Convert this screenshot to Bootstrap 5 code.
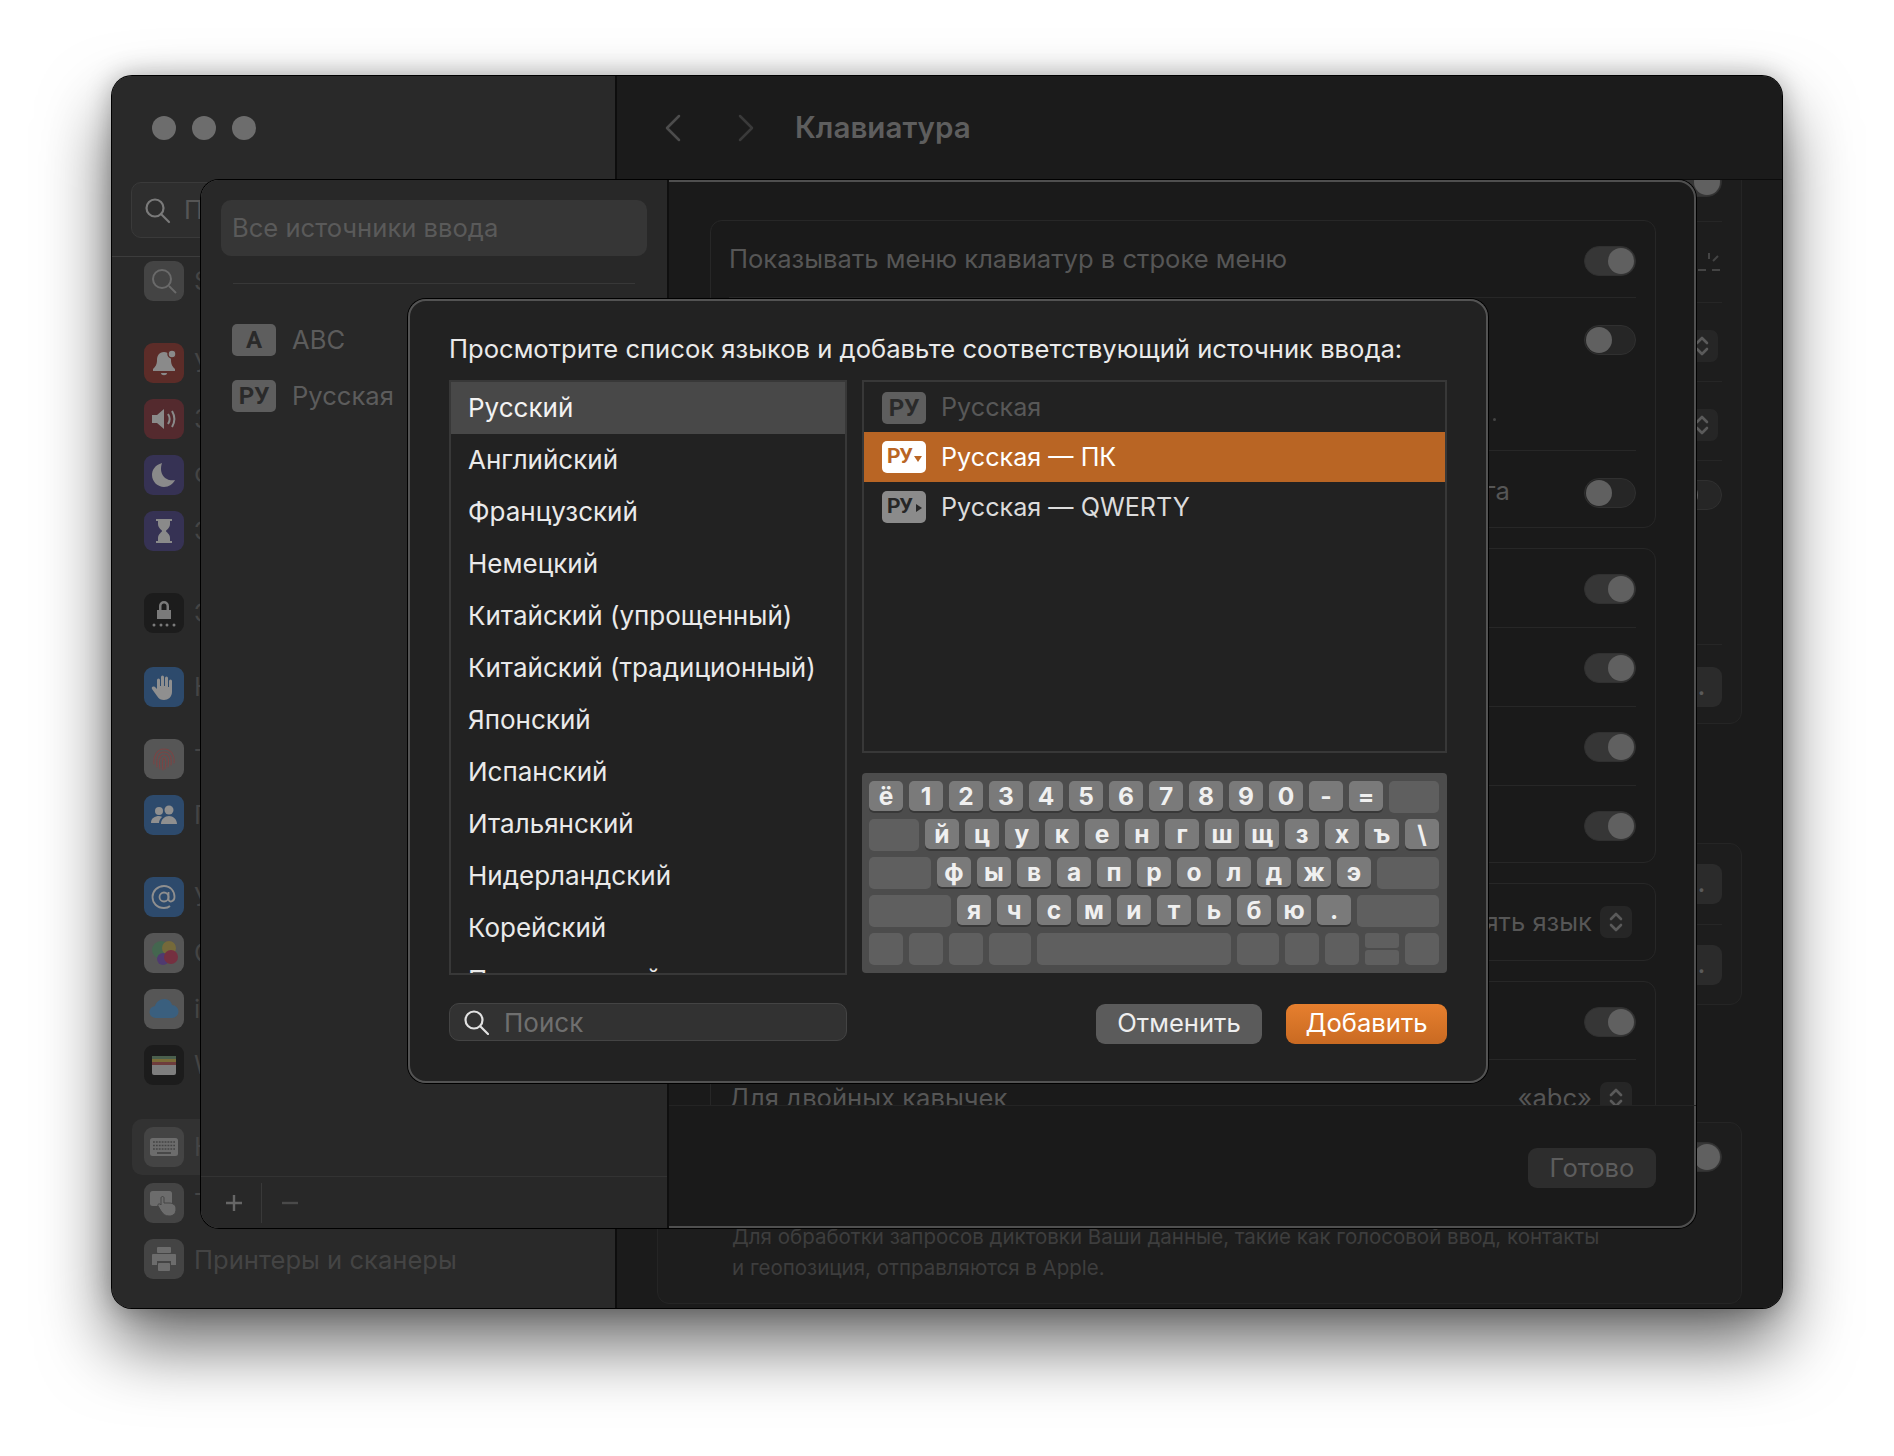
<!DOCTYPE html>
<html lang="ru">
<head>
    <meta charset="UTF-8">
    <meta name="viewport" content="width=device-width, initial-scale=1.0">
    <title>Клавиатура</title>

    <link href="https://cdn.jsdelivr.net/npm/bootstrap@5.3.0/dist/css/bootstrap.min.css" rel="stylesheet">

    <style>
        html, body { height: 100%; }
        body {
            background: #fff;
            font-family: "Inter", "Liberation Sans", sans-serif;
            font-size: 25.6px;
            overflow: hidden;
        }
        .stage { padding: 76px 111px 0 112px; }

        /* окна */
        .mac-window {
            position: relative;
            width: 1670px;
            height: 1232px;
            border-radius: 20px;
            box-shadow: 0 0 0 1px #000, inset 0 0 0 1px #4b4b4b, 0 36px 70px rgba(0, 0, 0, .6), 0 0 26px rgba(0, 0, 0, .28);
            overflow: hidden;
            background: #1b1b1b;
        }
        .side-pane { width: 505px; background: #292929; border-right: 2px solid #0d0d0d; flex-shrink: 0; }
        .traffic { padding: 40px 0 0 40px; height: 105px; }
        .traffic i { width: 24px; height: 24px; border-radius: 50%; background: #6d6d6d; display: block; }
        .side-search {
            margin: 1px 20px 0 19px; height: 56px; border-radius: 10px; border: 1px solid #3a3a3a;
            background: #2e2e2e; padding-left: 11px; color: #555;
        }
        .side-search .side-label { margin-left: 5px; }
        .side-rule { height: 19px; border-bottom: 1px solid #3c3c3c; }
        .side-list { padding: 4px 0 0 32px; }
        .side-row { height: 40px; color: #444; white-space: nowrap; margin-bottom: 16px; position: relative; }
        .side-row.gap-top { margin-top: 26px; }
        .side-row.tall { margin-top: 18px; margin-bottom: 32px; }
        .side-row.now::before {
            content: ""; position: absolute; left: -12px; right: 0; top: -8px; height: 56px; background: #323232; border-radius: 10px;
        }
        .side-label { width: 16px; margin-left: 2px; overflow: hidden; position: relative; }
        .side-label.open { width: auto; padding-top: 3px; }
        .tile {
            width: 40px; height: 40px; border-radius: 9px; flex-shrink: 0; position: relative;
            display: flex; align-items: center; justify-content: center;
        }
        .tile svg { width: 30px; height: 30px; }
        .tile-a { background: #444; }
        .tile-red { background: #5c2c28; }
        .tile-rose { background: #542a2e; }
        .tile-moon { background: #363254; }
        .tile-black { background: #1c1c1c; }
        .tile-blue { background: #2d4a6c; }
        .tile-grey { background: #565656; }
        .tile-soft { background: #444; }

        .main-pane { background: #1b1b1b; min-width: 0; }
        .main-head { height: 104px; border-bottom: 1px solid #0c0c0c; padding-left: 47px; flex-shrink: 0; }
        .main-head b { font-size: 29.6px; font-weight: 600; color: #5e5e5e; margin-left: 40px; }
        .fwd-chev { margin-left: 55px; }
        .main-body { padding: 0 40px; overflow: hidden; }
        .set-group { border: 1px solid #252525; border-radius: 12px; background: #1d1d1d; padding: 0 19px; }
        .set-group + .set-group { margin-top: 119px; }
        .set-group.shift-up { margin-top: -61px; }
        .set-group.last-group { margin-top: 117px; }
        .set-row { border-bottom: 1px solid #262626; }
        .set-row:last-child { border-bottom: 0; }
        .h-102 { height: 102px; } .h-81 { height: 81px; } .h-79 { height: 79px; } .h-184 { height: 184px; } .h-78 { height: 78px; }
        .hint { font-size: 20.5px; color: #3e3e3e; line-height: 31px; padding: 49px 0 20px 55px; }
        .sun { color: #444; }
        .nudge-r { margin-right: 4px; margin-top: 8px; }
        .nudge-b { margin-top: 6px; }
        .set-toggle-pad { padding-top: 19px; }
        .more-btn {
            width: 60px; height: 40px; border-radius: 9px; background: #2b2b2b; color: #5a5a5a;
            text-align: right; padding-right: 17px; line-height: 40px; font-size: 22px; font-weight: 700;
        }

        /* лист с источниками ввода */
        .source-sheet {
            position: absolute; left: 89px; top: 104px; width: 1495px; height: 1048px;
            border-radius: 18px; overflow: hidden; background: #1a1a1a;
            box-shadow: 0 0 0 1px #000, inset 0 0 0 2px #4f4f4f;
        }
        .sheet-left { width: 468px; background: #282828; border-right: 2px solid #0f0f0f; flex-shrink: 0; }
        .sheet-title {
            margin: 20px 20px 0; height: 56px; border-radius: 10px; background: #363636;
            color: #5a5a5a; padding-left: 11px;
        }
        .sheet-rule { margin: 27px 32px 0; border-top: 1px solid #383838; }
        .sheet-src { padding: 40px 0 0 31px; gap: 16px; color: #5c5c5c; line-height: 32px; }
        .badge-src {
            width: 44px; height: 32px; border-radius: 5px; background: #5e5e5e; color: #2a2a2a;
            font-family: "Roboto", "Liberation Sans", sans-serif;
            font-weight: 700; font-size: 24px; flex-shrink: 0; position: relative;
        }
        .sheet-foot { margin-top: auto; height: 52px; border-top: 1px solid #333; padding-left: 23px; color: #666; }
        .sheet-foot i { width: 1px; height: 40px; background: #393939; margin: 0 18px 0 17px; }
        .sheet-right { min-width: 0; }
        .sheet-scroll { height: 925px; overflow: hidden; padding: 40px 40px 0 41px; flex-shrink: 0; }
        .sheet-foot-r { border-top: 1px solid #242424; padding: 42px 40px 0 0; }
        .opt-group { border: 1px solid #272727; border-radius: 12px; padding: 0 19px 0 18px; color: #565656; margin-bottom: 20px; }
        .opt-row { border-bottom: 1px solid #272727; padding-top: 25px; }
        .opt-row:last-child { border-bottom: 0; }
        .opt-row.plain { padding-top: 0; }
        .opt-row.low { padding-top: 27px; }
        .h-77 { height: 77px; } .h-153 { height: 153px; } .h-76 { height: 76px; }
        .switch-dim { width: 52px; height: 30px; border-radius: 15px; background: #262626; border: 1px solid #303030; position: relative; flex-shrink: 0; }
        .switch-dim::after {
            content: ""; position: absolute; left: 1px; top: 1px; width: 26px; height: 26px; border-radius: 50%; background: #606060;
        }
        .switch-dim.on { background: #363636; }
        .switch-dim.on::after { left: 23px; }
        .stepper { width: 32px; height: 32px; border-radius: 7px; background: #262626; color: #5a5a5a; flex-shrink: 0; }
        .stepper svg { width: 16px; height: 24px; }
        .step-in { margin-right: 4px; }
        .done-btn { width: 128px; height: 40px; border-radius: 9px; background: #2d2d2d; color: #5d5d5d; padding: 0; border: 0; font-size: 25.6px; }
        .late-text { margin-right: 74px; margin-top: -6px; }
        .tail-dot { margin: 93px 88px 0 0; width: 3px; height: 3px; border-radius: 50%; background: #444; }
        .up-3 { margin-top: -6px; }
        .quote-row { padding-top: 19px; }

        /* диалог */
        .add-dialog {
            position: absolute; left: 296px; top: 223px; width: 1080px; height: 784px;
            border-radius: 18px; background: #222; padding: 35px 41px 0;
            box-shadow: 0 0 0 1px #000, inset 0 0 0 2px #535353;
            color: #eaeaea;
        }
        .dlg-title { line-height: 30px; margin-bottom: 16px; font-size: 25.6px; white-space: nowrap; }
        .lang-col { width: 398px; flex-shrink: 0; }
        .lang-list { height: 595px; border: 2px solid #383838; overflow: hidden; border-radius: 0; background: transparent; }
        .lang-list .list-group-item {
            height: 52px; border: 0; border-radius: 0; background: transparent; color: #eaeaea;
            padding: 0 0 2px 17px; display: flex; align-items: center; flex-shrink: 0; white-space: nowrap; font-size: 26px;
        }
        .lang-list .list-group-item.active { background: #484848; color: #f2f2f2; }
        .dlg-search { margin-top: 28px; height: 38px; position: relative; }
        .dlg-search .form-control {
            height: 38px; padding: 0 0 0 54px; border-radius: 10px; background: #323232; border: 1px solid #444;
            color: #eee; font-size: 26px; box-shadow: none;
        }
        .dlg-search .form-control::placeholder { color: #6f6f6f; }
        .dlg-search svg { position: absolute; left: 14px; top: 6px; width: 26px; height: 26px; color: #e2e2e2; }
        .side-col { min-width: 0; flex: 1; margin-left: 15px; }
        .layout-list { height: 373px; border: 2px solid #383838; background: transparent; border-radius: 0; }
        .layout-list .list-group-item {
            border: 0; border-radius: 0; background: transparent; color: #dcdcdc; height: 50px;
            padding: 0 0 0 18px; display: flex; align-items: center; gap: 15px; font-size: 25.2px;
        }
        .layout-list .list-group-item.first { color: #585858; height: 51px; }
        .layout-list .list-group-item.active { background: #b96524; color: #fff; }
        .item-text { padding-top: 2px; }
        .badge-mark { background: #fff; color: #b96524; }
        .badge-gray { background: #8b8b8b; color: #262626; }
        .tri-down, .tri-right { position: absolute; width: 0; height: 0; }
        .tri-down { right: 4px; top: 15px; border: 4px solid transparent; border-top: 6px solid #b96524; border-bottom: 0; }
        .tri-right { right: 4px; top: 13px; border: 4px solid transparent; border-left: 6px solid #262626; border-right: 0; }
        .badge-tight { justify-content: flex-start !important; padding-left: 5px; font-size: 21px; letter-spacing: -1px; }

        .kb-panel { margin-top: 20px; height: 200px; background: #4c4c4c; border-radius: 4px; padding: 8px 6px 8px 7px; gap: 6px; }
        .kb-line { gap: 6px; height: 32px; }
        .kc {
            width: 34px; height: 30px; border-radius: 5px; background: #7a7a7a; color: #f0f0f0;
            font-size: 24.5px; font-weight: 700; box-shadow: 0 2px 0 #383838; line-height: 1;
        }
        .kb-off { height: 32px; width: 34px; border-radius: 5px; background: #5f5f5f; flex-shrink: 0; }
        .w-42 { width: 42px; } .w-50p { width: 50px; } .w-62 { width: 62px; } .w-82 { width: 82px; } .w-194 { width: 194px; }
        .kb-arrows { width: 34px; gap: 2px; }
        .kb-arrows .kb-off { height: 15px; border-radius: 3px; }
        .dlg-actions { margin-top: 31px; gap: 24px; }
        .dlg-actions .btn {
            height: 40px; border-radius: 9px; border: 0; padding: 0 0 2px; font-size: 25.6px; line-height: 1;
        }
        .btn-plain { width: 166px; background: #5b5b5b; color: #eee; }
        .btn-plain:hover { background: #5b5b5b; color: #eee; }
        .btn-mac { width: 161px; background: linear-gradient(#e67f2e, #c96a22); color: #fff; }
        .btn-mac:hover { color: #fff; }
    </style>
</head>
<body>

<div class="stage">
    <div class="mac-window d-flex">

        <!-- боковая панель настроек -->
        <aside class="side-pane d-flex flex-column">
            <div class="traffic d-flex gap-3"><i></i><i></i><i></i></div>
            <div class="side-search d-flex align-items-center gap-2">
                <svg width="28" height="28" viewBox="0 0 28 28" fill="none" stroke="#7a7a7a" stroke-width="2.2"><circle cx="12" cy="12" r="8.5"/><path d="M18 18l8 8" stroke-linecap="round"/></svg>
                <span class="side-label">Поиск</span>
            </div>
            <div class="side-rule"></div>
            <div class="side-list d-flex flex-column">
                <div class="side-row d-flex align-items-center gap-2">
                    <span class="tile tile-a"><svg viewBox="0 0 30 30" fill="none" stroke="#6a6a6a" stroke-width="2"><circle cx="13" cy="13" r="9"/><path d="M20 20l7 7"/></svg></span><span class="side-label">Spotlight</span>
                </div>
                <div class="side-row gap-top d-flex align-items-center gap-2">
                    <span class="tile tile-red"><svg viewBox="0 0 30 30" fill="#8a8a8a"><path d="M15 4c-5 0-7 4-7 8 0 5-2 7-4 9v2h22v-2c-2-2-4-4-4-9 0-4-2-8-7-8z"/><path d="M12 25h6c0 3-6 3-6 0z"/><circle cx="23" cy="6" r="4" fill="#8a8a8a" stroke="#5c2c28" stroke-width="1.5"/></svg></span><span class="side-label">Уведомления</span>
                </div>
                <div class="side-row d-flex align-items-center gap-2">
                    <span class="tile tile-rose"><svg viewBox="0 0 30 30" fill="#8a8a8a"><path d="M3 11h5l7-6v20l-7-6H3z"/><path d="M19 10c2 3 2 7 0 10M23 7c3 5 3 11 0 16" fill="none" stroke="#8a8a8a" stroke-width="2"/></svg></span><span class="side-label">Звук</span>
                </div>
                <div class="side-row d-flex align-items-center gap-2">
                    <span class="tile tile-moon"><svg viewBox="0 0 30 30" fill="#8a8a8a"><path d="M13 3C6 5 3 10 3 15c0 7 6 12 12 12 5 0 9-3 11-7-8 2-17-5-13-17z"/></svg></span><span class="side-label">Фокусирование</span>
                </div>
                <div class="side-row d-flex align-items-center gap-2">
                    <span class="tile tile-moon"><svg viewBox="0 0 30 30" fill="#8a8a8a"><path d="M7 3h16v2h-2v3c0 4-4 6-4 7s4 3 4 7v3h2v2H7v-2h2v-3c0-4 4-6 4-7s-4-3-4-7V5H7z"/></svg></span><span class="side-label">Экранное время</span>
                </div>
                <div class="side-row gap-top d-flex align-items-center gap-2">
                    <span class="tile tile-black"><svg viewBox="0 0 30 30" fill="#7a7a7a"><path d="M10 12V8a5 5 0 0110 0v4h2v9H8v-9zm2.500 0h5V8a2.500 2.500 0 00-5 0z"/><circle cx="5" cy="27" r="1.500"/><circle cx="12" cy="27" r="1.500"/><circle cx="18" cy="27" r="1.500"/><circle cx="25" cy="27" r="1.500"/></svg></span><span class="side-label">Экран блокировки</span>
                </div>
                <div class="side-row tall d-flex align-items-center gap-2">
                    <span class="tile tile-blue"><svg viewBox="0 0 30 30" fill="#8f8f8f"><path d="M8 8a1.500 1.500 0 013 0v6h1V5a1.500 1.500 0 013 0v9h1V6a1.500 1.500 0 013 0v9h1V9a1.500 1.500 0 013 0v11c0 5-4 8-8 8-3 0-5-1-7-4l-5-7c-1-2 1-3 3-2l2 2z"/></svg></span><span class="side-label">Конфиденциальность</span>
                </div>
                <div class="side-row d-flex align-items-center gap-2">
                    <span class="tile tile-grey"><svg viewBox="0 0 30 30" fill="none" stroke="#7c4444" stroke-width="1.100" stroke-linecap="round"><path d="M5 20c-1-8 3-15 10-15s11 6 10 14"/><path d="M8 23c-1-9 1-15 7-15s8 5 7 13"/><path d="M11 25c-1-6-1-14 4-14s5 5 4 12"/><path d="M14 26c-1-4-1-12 1-12s2 5 1 11"/></svg></span><span class="side-label">Touch ID</span>
                </div>
                <div class="side-row d-flex align-items-center gap-2">
                    <span class="tile tile-blue"><svg viewBox="0 0 30 30" fill="#8f8f8f"><circle cx="10" cy="11" r="4"/><circle cx="20" cy="10" r="4.500"/><path d="M2 23c0-5 4-7 8-7 2 0 3 1 3 1-2 2-3 4-3 6zM12 24c0-5 4-8 8-8s8 3 8 8z"/></svg></span><span class="side-label">Пользователи</span>
                </div>
                <div class="side-row gap-top d-flex align-items-center gap-2">
                    <span class="tile tile-blue"><svg viewBox="0 0 30 30" fill="none" stroke="#8f8f8f" stroke-width="1.800"><circle cx="15" cy="15" r="4.500"/><path d="M19.500 10v7c0 4 6 3 6-2 0-6-4-11-10.500-11S3.500 9 3.500 15 8 26 15 26c3 0 5-1 6-2"/></svg></span><span class="side-label">Учетные записи</span>
                </div>
                <div class="side-row d-flex align-items-center gap-2">
                    <span class="tile tile-grey"><svg viewBox="0 0 30 30"><circle cx="12" cy="12" r="9" fill="#44664f"/><circle cx="20" cy="10" r="7" fill="#75693a"/><circle cx="14" cy="21" r="6" fill="#4f3a70"/><circle cx="22" cy="19" r="7" fill="#753040"/></svg></span><span class="side-label">Game Center</span>
                </div>
                <div class="side-row d-flex align-items-center gap-2">
                    <span class="tile tile-grey"><svg viewBox="0 0 30 30" fill="#3a5f7e"><path d="M7 24a6 6 0 01-1-12c1-4 5-7 9-7s7 2 8 6a6.500 6.500 0 010 13z"/></svg></span><span class="side-label">iCloud</span>
                </div>
                <div class="side-row d-flex align-items-center gap-2">
                    <span class="tile tile-black"><svg viewBox="0 0 30 30"><rect x="3" y="6" width="24" height="19" rx="2" fill="#7e7e7e"/><rect x="3" y="6" width="24" height="3" fill="#4a5f4d"/><rect x="3" y="9" width="24" height="3" fill="#7a6c38"/><rect x="3" y="12" width="24" height="3" fill="#6e3c3c"/></svg></span><span class="side-label">Wallet</span>
                </div>
                <div class="side-row gap-top now d-flex align-items-center gap-2">
                    <span class="tile tile-soft"><svg viewBox="0 0 30 30" fill="none"><rect x="1" y="6" width="28" height="18" rx="2.500" fill="#6c6c6c"/><path d="M4 10h22M4 13.500h22M4 17h22" stroke="#444" stroke-width="1.600" stroke-dasharray="1.800 1.100"/><path d="M8 21h14" stroke="#444" stroke-width="1.800"/></svg></span><span class="side-label">Клавиатура</span>
                </div>
                <div class="side-row d-flex align-items-center gap-2">
                    <span class="tile tile-soft"><svg viewBox="0 0 30 30" fill="#6c6c6c"><rect x="1" y="3" width="22" height="15" rx="2.500"/><path d="M12 10c0-2 3-2 3 0v5h5c4 0 7 2 7 6 0 5-3 7-7 7-4 0-6-2-8-5l-3-5c-1-2 2-3 3-1z" stroke="#444"/></svg></span><span class="side-label">Трекпад</span>
                </div>
                <div class="side-row d-flex align-items-center gap-2">
                    <span class="tile tile-soft"><svg viewBox="0 0 30 30" fill="#6c6c6c"><rect x="8" y="3" width="14" height="6" rx="1"/><path d="M4 10h22a1 1 0 011 1v10h-5v-4H8v4H3V11a1 1 0 011-1z"/><rect x="9" y="19" width="12" height="8" rx="1"/></svg></span><span class="side-label open">Принтеры и сканеры</span>
                </div>
            </div>
        </aside>

        <!-- правая часть окна, под листом -->
        <section class="main-pane flex-grow-1 d-flex flex-column">
            <header class="main-head d-flex align-items-center">
                <svg width="18" height="30" viewBox="0 0 18 30" fill="none" stroke="#4c4c4c" stroke-width="2.500" stroke-linecap="round" stroke-linejoin="round"><path d="M15 3L3 15l12 12"/></svg>
                <svg class="fwd-chev" width="18" height="30" viewBox="0 0 18 30" fill="none" stroke="#3a3a3a" stroke-width="2.500" stroke-linecap="round" stroke-linejoin="round"><path d="M3 3l12 12L3 27"/></svg>
                <b>Клавиатура</b>
            </header>
            <div class="main-body flex-grow-1">
                <div class="set-group shift-up">
                    <div class="set-row h-102 d-flex justify-content-end align-items-end pb-4"><span class="switch-dim on"></span></div>
                    <div class="set-row h-81 d-flex justify-content-end align-items-center">
                        <svg class="sun" width="26" height="20" viewBox="0 0 26 20" fill="none" stroke="currentColor" stroke-width="2"><path d="M13 1v6M22 4l-5 5M2 18h8M16 18h8"/></svg>
                    </div>
                    <div class="set-row h-79 d-flex justify-content-end align-items-center">
                        <span class="stepper nudge-r d-flex align-items-center justify-content-center"><svg viewBox="0 0 16 24" fill="none" stroke="currentColor" stroke-width="2.600" stroke-linecap="round" stroke-linejoin="round"><path d="M3 9l5-5 5 5M3 15l5 5 5-5"/></svg></span>
                    </div>
                    <div class="set-row h-79 d-flex justify-content-end align-items-center">
                        <span class="stepper nudge-r d-flex align-items-center justify-content-center"><svg viewBox="0 0 16 24" fill="none" stroke="currentColor" stroke-width="2.600" stroke-linecap="round" stroke-linejoin="round"><path d="M3 9l5-5 5 5M3 15l5 5 5-5"/></svg></span>
                    </div>
                    <div class="set-row h-184 d-flex justify-content-end align-items-start set-toggle-pad"><span class="switch-dim"></span></div>
                    <div class="set-row h-78 d-flex justify-content-end align-items-center"><span class="more-btn nudge-b">.</span></div>
                </div>
                <div class="set-group">
                    <div class="set-row h-81 d-flex justify-content-end align-items-center"><span class="more-btn">.</span></div>
                    <div class="set-row h-79 d-flex justify-content-end align-items-center"><span class="more-btn">.</span></div>
                </div>
                <div class="set-group last-group">
                    <div class="d-flex justify-content-end set-toggle-pad"><span class="switch-dim on"></span></div>
                    <p class="hint mb-0">Для обработки запросов диктовки Ваши данные, такие как голосовой ввод, контакты<br>и геопозиция, отправляются в Apple.</p>
                </div>
            </div>
        </section>

        <!-- лист «Все источники ввода» -->
        <div class="source-sheet d-flex">
            <div class="sheet-left d-flex flex-column">
                <div class="sheet-title d-flex align-items-center">Все источники ввода</div>
                <div class="sheet-rule"></div>
                <div class="d-flex flex-column">
                    <div class="sheet-src d-flex align-items-center"><span class="badge-src d-flex align-items-center justify-content-center">A</span><span>ABC</span></div>
                    <div class="sheet-src d-flex align-items-center pt-4"><span class="badge-src d-flex align-items-center justify-content-center">РУ</span><span>Русская</span></div>
                </div>
                <div class="sheet-foot d-flex align-items-center">
                    <svg width="20" height="20" viewBox="0 0 20 20" stroke="currentColor" stroke-width="2.400"><path d="M10 2v16M2 10h16"/></svg>
                    <i></i>
                    <svg width="20" height="20" viewBox="0 0 20 20" stroke="#4a4a4a" stroke-width="2.400"><path d="M2 10h16"/></svg>
                </div>
            </div>
            <div class="sheet-right flex-grow-1 d-flex flex-column">
                <div class="sheet-scroll">
                    <div class="opt-group">
                        <div class="opt-row h-77 d-flex justify-content-between align-items-start"><span class="up-3">Показывать меню клавиатур в строке меню</span><span class="switch-dim on"></span></div>
                        <div class="opt-row low h-153 d-flex justify-content-end align-items-start"><span class="tail-dot"></span><span class="switch-dim"></span></div>
                        <div class="opt-row low h-76 d-flex justify-content-end align-items-start"><span class="late-text">га</span><span class="switch-dim"></span></div>
                    </div>
                    <div class="opt-group">
                        <div class="opt-row h-79 d-flex justify-content-end align-items-start"><span class="switch-dim on"></span></div>
                        <div class="opt-row h-79 d-flex justify-content-end align-items-start"><span class="switch-dim on"></span></div>
                        <div class="opt-row h-79 d-flex justify-content-end align-items-start"><span class="switch-dim on"></span></div>
                        <div class="opt-row h-76 d-flex justify-content-end align-items-start"><span class="switch-dim on"></span></div>
                    </div>
                    <div class="opt-group">
                        <div class="opt-row plain h-76 d-flex justify-content-end align-items-center gap-2"><span>ять язык</span>
                            <span class="stepper step-in d-flex align-items-center justify-content-center"><svg viewBox="0 0 16 24" fill="none" stroke="currentColor" stroke-width="2.600" stroke-linecap="round" stroke-linejoin="round"><path d="M3 9l5-5 5 5M3 15l5 5 5-5"/></svg></span>
                        </div>
                    </div>
                    <div class="opt-group">
                        <div class="opt-row h-78 d-flex justify-content-end align-items-start"><span class="switch-dim on"></span></div>
                        <div class="opt-row plain h-76 d-flex justify-content-between align-items-start"><span class="quote-row">Для двойных кавычек</span>
                            <span class="d-flex align-items-center gap-2 quote-row">«abc»
                                <span class="stepper step-in d-flex align-items-center justify-content-center"><svg viewBox="0 0 16 24" fill="none" stroke="currentColor" stroke-width="2.600" stroke-linecap="round" stroke-linejoin="round"><path d="M3 9l5-5 5 5M3 15l5 5 5-5"/></svg></span>
                            </span>
                        </div>
                    </div>
                </div>
                <div class="sheet-foot-r d-flex justify-content-end">
                    <button type="button" class="btn done-btn">Готово</button>
                </div>
            </div>
        </div>

        <!-- диалог добавления источника -->
        <div class="add-dialog">
            <div class="dlg-title">Просмотрите список языков и добавьте соответствующий источник ввода:</div>
            <div class="d-flex">
                <div class="lang-col">
                    <ul class="list-group lang-list">
                        <li class="list-group-item active">Русский</li>
                        <li class="list-group-item">Английский</li>
                        <li class="list-group-item">Французский</li>
                        <li class="list-group-item">Немецкий</li>
                        <li class="list-group-item">Китайский (упрощенный)</li>
                        <li class="list-group-item">Китайский (традиционный)</li>
                        <li class="list-group-item">Японский</li>
                        <li class="list-group-item">Испанский</li>
                        <li class="list-group-item">Итальянский</li>
                        <li class="list-group-item">Нидерландский</li>
                        <li class="list-group-item">Корейский</li>
                        <li class="list-group-item">Португальский</li>
                    </ul>
                    <div class="dlg-search">
                        <input type="text" class="form-control" placeholder="Поиск">
                        <svg viewBox="0 0 26 26" fill="none" stroke="currentColor" stroke-width="2.200" stroke-linecap="round"><circle cx="11" cy="11" r="8.500"/><path d="M17.500 17.500L25 25"/></svg>
                    </div>
                </div>
                <div class="side-col">
                    <ul class="list-group layout-list">
                        <li class="list-group-item first"><span class="badge-src d-flex align-items-center justify-content-center">РУ</span>Русская</li>
                        <li class="list-group-item active"><span class="badge-src badge-mark badge-tight d-flex align-items-center">РУ<span class="tri-down"></span></span><span class="item-text">Русская — ПК</span></li>
                        <li class="list-group-item"><span class="badge-src badge-gray badge-tight d-flex align-items-center">РУ<span class="tri-right"></span></span><span class="item-text">Русская — QWERTY</span></li>
                    </ul>
                    <div class="kb-panel d-flex flex-column">
                        <div class="kb-line d-flex">
                            <span class="kc d-flex align-items-center justify-content-center">ё</span><span class="kc d-flex align-items-center justify-content-center">1</span><span class="kc d-flex align-items-center justify-content-center">2</span><span class="kc d-flex align-items-center justify-content-center">3</span><span class="kc d-flex align-items-center justify-content-center">4</span><span class="kc d-flex align-items-center justify-content-center">5</span><span class="kc d-flex align-items-center justify-content-center">6</span><span class="kc d-flex align-items-center justify-content-center">7</span><span class="kc d-flex align-items-center justify-content-center">8</span><span class="kc d-flex align-items-center justify-content-center">9</span><span class="kc d-flex align-items-center justify-content-center">0</span><span class="kc d-flex align-items-center justify-content-center">-</span><span class="kc d-flex align-items-center justify-content-center">=</span>
                            <span class="kb-off w-50p"></span>
                        </div>
                        <div class="kb-line d-flex">
                            <span class="kb-off w-50p"></span>
                            <span class="kc d-flex align-items-center justify-content-center">й</span><span class="kc d-flex align-items-center justify-content-center">ц</span><span class="kc d-flex align-items-center justify-content-center">у</span><span class="kc d-flex align-items-center justify-content-center">к</span><span class="kc d-flex align-items-center justify-content-center">е</span><span class="kc d-flex align-items-center justify-content-center">н</span><span class="kc d-flex align-items-center justify-content-center">г</span><span class="kc d-flex align-items-center justify-content-center">ш</span><span class="kc d-flex align-items-center justify-content-center">щ</span><span class="kc d-flex align-items-center justify-content-center">з</span><span class="kc d-flex align-items-center justify-content-center">х</span><span class="kc d-flex align-items-center justify-content-center">ъ</span><span class="kc d-flex align-items-center justify-content-center">\</span>
                        </div>
                        <div class="kb-line d-flex">
                            <span class="kb-off w-62"></span>
                            <span class="kc d-flex align-items-center justify-content-center">ф</span><span class="kc d-flex align-items-center justify-content-center">ы</span><span class="kc d-flex align-items-center justify-content-center">в</span><span class="kc d-flex align-items-center justify-content-center">а</span><span class="kc d-flex align-items-center justify-content-center">п</span><span class="kc d-flex align-items-center justify-content-center">р</span><span class="kc d-flex align-items-center justify-content-center">о</span><span class="kc d-flex align-items-center justify-content-center">л</span><span class="kc d-flex align-items-center justify-content-center">д</span><span class="kc d-flex align-items-center justify-content-center">ж</span><span class="kc d-flex align-items-center justify-content-center">э</span>
                            <span class="kb-off w-62"></span>
                        </div>
                        <div class="kb-line d-flex">
                            <span class="kb-off w-82"></span>
                            <span class="kc d-flex align-items-center justify-content-center">я</span><span class="kc d-flex align-items-center justify-content-center">ч</span><span class="kc d-flex align-items-center justify-content-center">с</span><span class="kc d-flex align-items-center justify-content-center">м</span><span class="kc d-flex align-items-center justify-content-center">и</span><span class="kc d-flex align-items-center justify-content-center">т</span><span class="kc d-flex align-items-center justify-content-center">ь</span><span class="kc d-flex align-items-center justify-content-center">б</span><span class="kc d-flex align-items-center justify-content-center">ю</span><span class="kc d-flex align-items-center justify-content-center">.</span>
                            <span class="kb-off w-82"></span>
                        </div>
                        <div class="kb-line d-flex">
                            <span class="kb-off"></span><span class="kb-off"></span><span class="kb-off"></span><span class="kb-off w-42"></span><span class="kb-off w-194"></span><span class="kb-off w-42"></span><span class="kb-off"></span><span class="kb-off"></span>
                            <span class="kb-arrows d-flex flex-column"><span class="kb-off"></span><span class="kb-off"></span></span>
                            <span class="kb-off"></span>
                        </div>
                    </div>
                    <div class="dlg-actions d-flex justify-content-end">
                        <button type="button" class="btn btn-plain">Отменить</button>
                        <button type="button" class="btn btn-mac">Добавить</button>
                    </div>
                </div>
            </div>
        </div>

    </div>
</div>

<script src="https://cdn.jsdelivr.net/npm/bootstrap@5.3.0/dist/js/bootstrap.bundle.min.js"></script>
</body>
</html>
